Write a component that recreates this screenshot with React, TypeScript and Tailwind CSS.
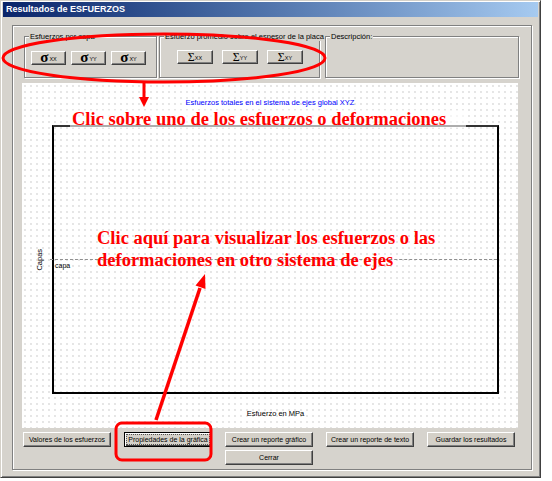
const btn =
  "bg-[#d4d0c8] border border-t-white border-l-white border-r-[#404040] border-b-[#404040] shadow-[inset_-1px_-1px_0_#808080] flex items-center justify-center text-black leading-none whitespace-nowrap";

const groupBox =
  "border border-[#808080] shadow-[inset_1px_1px_0_white,1px_1px_0_white] h-[42px]";

function Sigma({ sub }: { sub: string }) {
  return (
    <button type="button" className={`${btn} w-[35px] h-[14px]`}>
      <span className="font-['Liberation_Serif',serif] font-bold text-[15px] leading-none relative -top-[1px]">σ</span>
      <span className="text-[5.5px] relative top-[2px] ml-[1px]">{sub}</span>
    </button>
  );
}

function BigSigma({ sub }: { sub: string }) {
  return (
    <button type="button" className={`${btn} w-[36px] h-[14px]`}>
      <span className="font-['Liberation_Serif',serif] text-[12px] leading-none">Σ</span>
      <span className="text-[5.5px] relative top-[2px]">{sub}</span>
    </button>
  );
}

function Group({
  title,
  className,
  children,
}: {
  title: string;
  className: string;
  children?: React.ReactNode;
}) {
  return (
    <div className={`relative ${groupBox} ${className}`}>
      <span className="absolute -top-[5px] left-[4px] bg-[#d6d3cd] px-[1px] text-[7.5px] leading-[9px] text-black whitespace-nowrap">
        {title}
      </span>
      {children}
    </div>
  );
}

export default function App() {
  return (
    <div className="relative w-[552px] h-[481px] bg-white font-['Liberation_Sans',Arial,sans-serif]">
      <div className="w-[541px] h-[478px] bg-[#d6d3cd] border border-t-[#d4d0c8] border-l-[#d4d0c8] border-r-[#404040] border-b-[#404040] shadow-[inset_1px_1px_0_white,inset_-1px_-1px_0_#808080] p-[1px] flex flex-col">
        <div className="h-[15px] ml-[1px] mr-[1px] bg-gradient-to-r from-[#0a246a] to-[#a6caf0] flex items-center px-[3px]">
          <span className="text-white font-bold text-[9px] leading-none">Resultados de ESFUERZOS</span>
        </div>

        <div className="ml-[10px] mt-[8px] w-[520px] h-[445px] border border-[#808080] shadow-[inset_1px_1px_0_white,1px_1px_0_white] flex flex-col">
          <div className="flex mt-[10px] ml-[11px]">
            <Group title="Esfuerzos por capa" className="w-[133px]">
              <div className="flex gap-[5px] pl-[6px] pt-[14px]">
                <Sigma sub="XX" />
                <Sigma sub="YY" />
                <Sigma sub="XY" />
              </div>
            </Group>
            <Group
              title="Esfuerzo promedio sobre el espesor de la placa"
              className="w-[161px] ml-[2px]"
            >
              <div className="flex gap-[9px] pl-[17px] pt-[13px]">
                <BigSigma sub="XX" />
                <BigSigma sub="YY" />
                <BigSigma sub="XY" />
              </div>
            </Group>
            <Group title="Descripción:" className="w-[194px] ml-[5px]" />
          </div>

          <div className="ml-[9px] mt-[5px] w-[496px] h-[345px] bg-white bg-[radial-gradient(circle,#c8c8c8_0.6px,transparent_0.8px)] bg-[length:6px_6px] flex flex-col">
            <div className="pt-[15px] text-center text-[7.5px] leading-[9px] text-[#0000ff]">
              Esfuerzos totales en el sistema de ejes global XYZ
            </div>
            <div className="flex mt-[18px]">
              <div className="w-[30px] flex items-center justify-center">
                <span className="-rotate-90 text-[7.5px] leading-none ml-[6px]">Capas</span>
              </div>
              <div className="relative w-[447px] h-[269px] border-2 border-black border-t-[#333]">
                <div className="absolute left-[-4px] right-0 top-[132px] border-t border-dashed border-[#909090]" />
                <span className="absolute left-[1px] top-[135px] text-[7px] leading-none">capa</span>
              </div>
            </div>
            <div className="mt-[15px] pl-[30px] w-[477px] text-center text-[7.5px] leading-[9px]">
              Esfuerzo en MPa
            </div>
          </div>

          <div className="grid grid-cols-[88px_88px_88px_88px_88px] gap-x-[13px] gap-y-[3px] ml-[10px] mt-[4px] text-[7px]">
            <button type="button" className={`${btn} h-[15px]`}>Valores de los esfuerzos</button>
            <button
              type="button"
              className="h-[15px] bg-[#d4d0c8] border border-black shadow-[inset_1px_1px_0_white,inset_-1px_-1px_0_#404040] flex items-center justify-center leading-none whitespace-nowrap text-black"
            >
              <span className="border border-dotted border-[#505050] px-[1px] py-[1px] leading-none">
                Propiedades de la gráfica
              </span>
            </button>
            <button type="button" className={`${btn} h-[15px]`}>Crear un reporte gráfico</button>
            <button type="button" className={`${btn} h-[15px]`}>Crear un reporte de texto</button>
            <button type="button" className={`${btn} h-[15px]`}>Guardar los resultados</button>
            <button type="button" className={`${btn} h-[15px] col-start-3`}>Cerrar</button>
          </div>
        </div>
      </div>

      {/* red annotations drawn over the dialog */}
      <svg
        className="absolute inset-0 pointer-events-none"
        width="552"
        height="481"
        viewBox="0 0 552 481"
      >
        <ellipse cx="164" cy="58" rx="161" ry="24" fill="none" stroke="#ff0000" strokeWidth="3" />
        <line x1="144" y1="83" x2="144" y2="98" stroke="#ff0000" strokeWidth="3" />
        <polygon points="139,97 149,97 144,107" fill="#ff0000" />
        <line x1="156" y1="420" x2="200" y2="288" stroke="#ff0000" strokeWidth="3.5" />
        <polygon points="205,274 205.5,289 195.5,285.5" fill="#ff0000" />
        <rect x="116" y="423" width="95" height="37" rx="6" fill="none" stroke="#ff0000" strokeWidth="3" />
      </svg>
      <div className="absolute left-[70px] top-[110px] pl-[2px] pr-[20px] bg-white/60 text-[18.5px] leading-[18px] font-bold text-[#ff0000] font-['Liberation_Serif','Times_New_Roman',serif] whitespace-nowrap">
        Clic sobre uno de los esfuerzos o deformaciones
      </div>
      <div className="absolute left-[97px] top-[227px] text-[18.5px] leading-[22px] font-bold text-[#ff0000] font-['Liberation_Serif','Times_New_Roman',serif] whitespace-nowrap">
        Clic aquí para visualizar los esfuerzos o las
        <br />
        deformaciones en otro sistema de ejes
      </div>
    </div>
  );
}
